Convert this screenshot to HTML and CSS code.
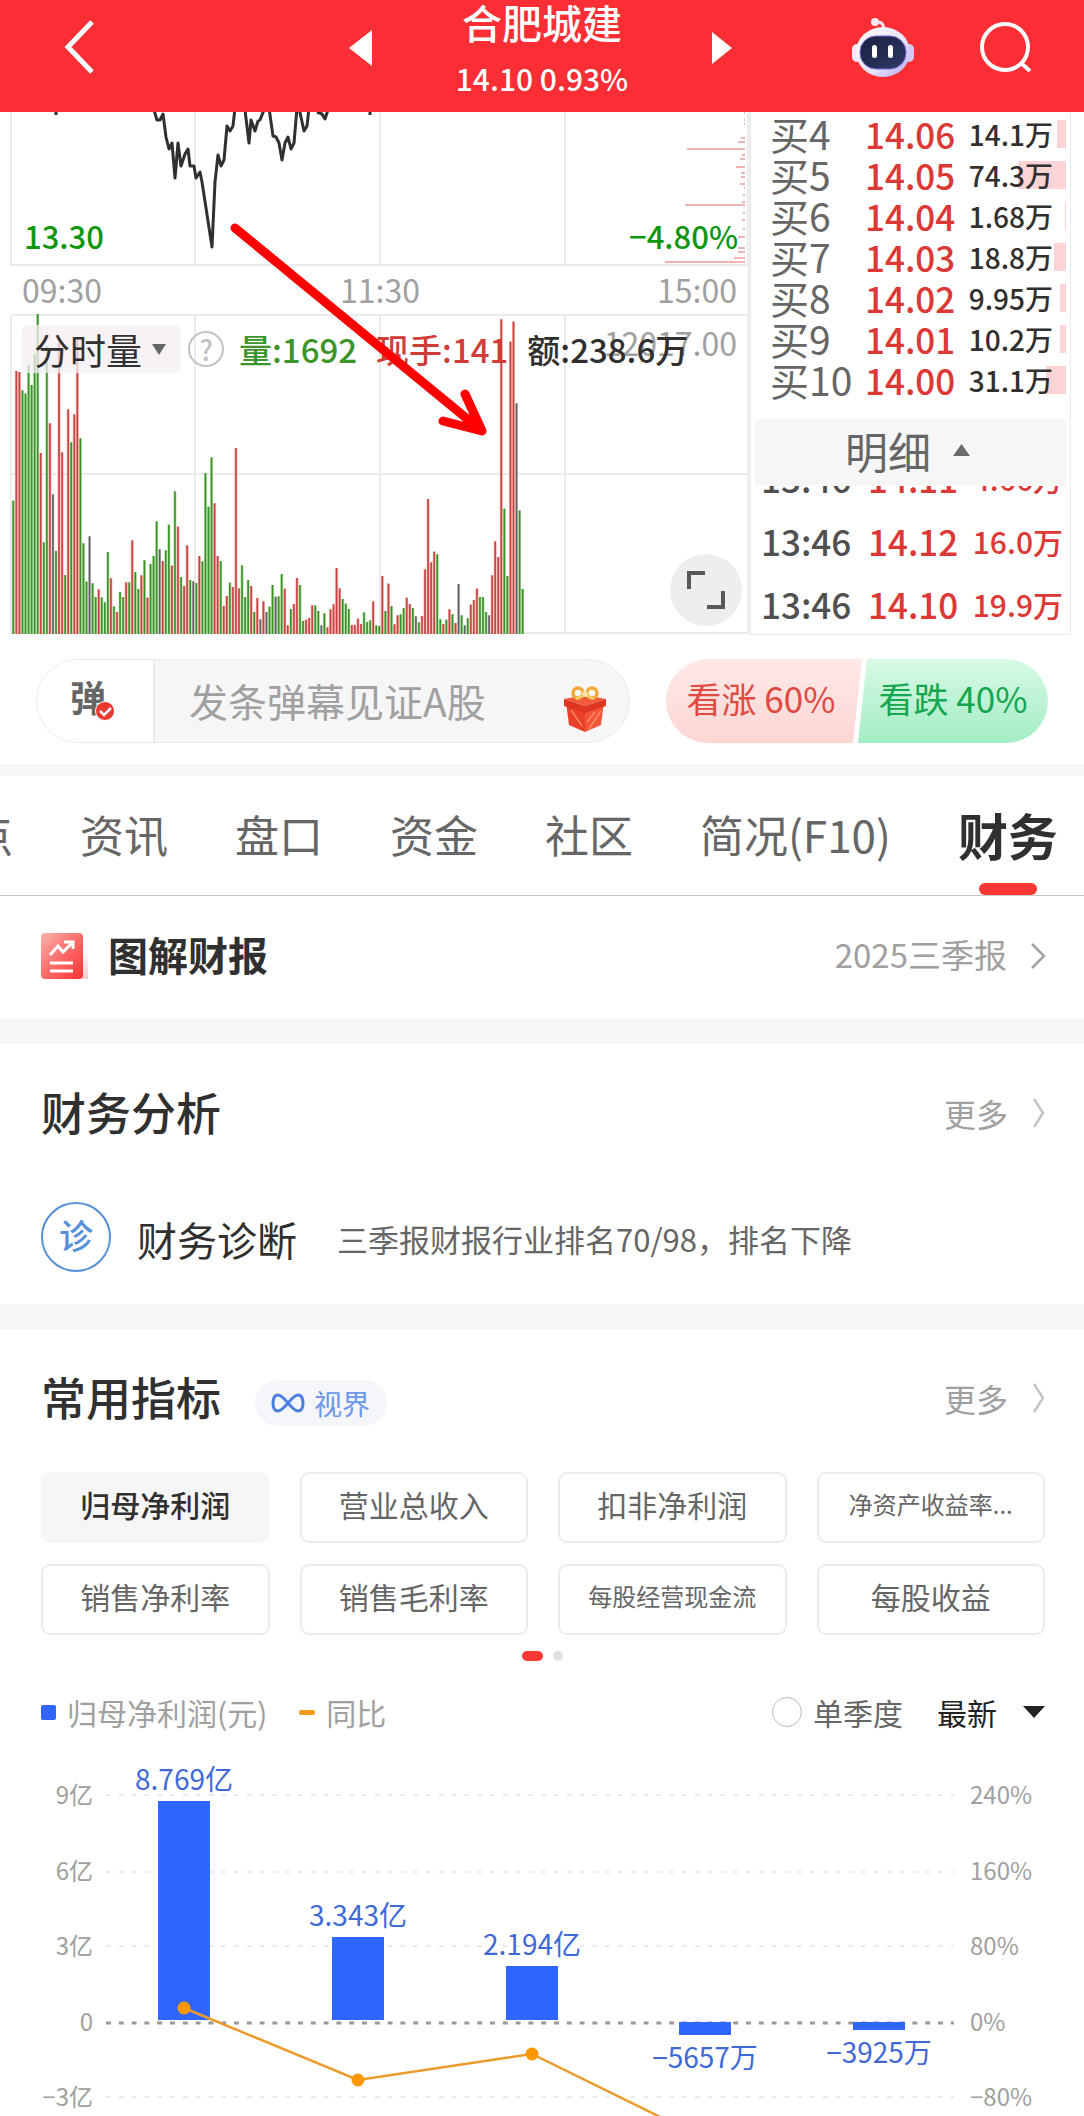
FILE: index.html
```html
<!DOCTYPE html>
<html lang="zh-CN">
<head>
<meta charset="utf-8">
<meta name="viewport" content="width=device-width, initial-scale=1">
<title>合肥城建</title>
<link rel="stylesheet" href="styles.css">
</head>
<body>
<header class="topbar">
  <div class="topbar-left">
    <button class="icon-btn" aria-label="返回">
      <svg width="32" height="56" viewBox="0 0 32 56" fill="none" stroke="#fff" stroke-width="5"><path d="M28 3 4 28l24 25"/></svg>
    </button>
  </div>
  <div class="switcher">
    <button class="icon-btn" aria-label="上一只"><svg width="23" height="36" viewBox="0 0 23 36"><path fill="#fff" d="M23 0v36L0 18z"/></svg></button>
    <div class="stock-title">
      <h1>合肥城建</h1>
      <p>14.10 0.93%</p>
    </div>
    <button class="icon-btn" aria-label="下一只"><svg width="20" height="32" viewBox="0 0 20 32"><path fill="#fff" d="M0 0v32l20-16z"/></svg></button>
  </div>
  <div class="topbar-right">
    <button class="icon-btn" aria-label="智能助手">
      <svg width="62" height="60" viewBox="0 0 62 60">
        <defs>
          <linearGradient id="shell" x1="0" y1="0" x2="1" y2="1"><stop offset="0" stop-color="#fff"/><stop offset=".6" stop-color="#e6e2fb"/><stop offset="1" stop-color="#b4a6ee"/></linearGradient>
          <linearGradient id="visor" x1="0" y1="0" x2="1" y2="1"><stop offset="0" stop-color="#1b2140"/><stop offset=".5" stop-color="#222c52"/><stop offset="1" stop-color="#313d66"/></linearGradient>
        </defs>
        <path d="M23 5q8-1 9 6" fill="none" stroke="#f6dfe8" stroke-width="3"/>
        <circle cx="23" cy="5" r="4" fill="#f9e6ee"/>
        <rect x="0" y="27" width="10" height="18" rx="5" fill="#efeafc"/>
        <rect x="52" y="27" width="10" height="18" rx="5" fill="#d3c9f6"/>
        <ellipse cx="31" cy="35" rx="27" ry="25" fill="url(#shell)"/>
        <rect x="8" y="19" width="46" height="33" rx="16" fill="url(#visor)" stroke="#7569d8" stroke-width="1"/>
        <rect x="20" y="28" width="5" height="13" rx="2.5" fill="#fff"/>
        <rect x="36" y="28" width="5" height="13" rx="2.5" fill="#fff"/>
      </svg>
    </button>
    <button class="icon-btn" aria-label="搜索">
      <svg width="52" height="52" viewBox="0 0 52 52" fill="none" stroke="#fff" stroke-width="4"><circle cx="25" cy="26" r="23"/><path d="m41 42 9 8"/></svg>
    </button>
  </div>
</header>

<main>
<section class="quote">
  <div class="intraday">
    <svg class="plot" viewBox="0 112 750 523" role="img" aria-label="分时走势与成交量">
      <g fill="none" stroke="#ebebeb" stroke-width="2">
        <path d="M11 112v153h737v-153M195 112v153M380 112v153M565 112v153"/>
        <path d="M11 315h737v318H11zM195 315v318M380 315v318M565 315v318M11 474h737"/>
        <path d="M749 112v523" stroke="#eee" stroke-width="3"/>
      </g>
      <path fill="none" stroke="#f0b4b4" stroke-width="2" d="M744 113h1M744 120h1M744 124h1M741 138h4M738 142h7M687 149h58M742 155h3M740 159h5M736 167h9M741 173h4M741 177h4M740 184h5M744 188h1M743 195h2M742 202h3M685 205h60M743 213h2M742 220h3M743 229h2M738 237h7M738 248h7M738 252h7M734 258h11M665 262h80"/>
      <g fill="none" stroke="#303030" stroke-width="3" stroke-linejoin="round">
        <path d="M154 110 157 120H160L163 114 166 137 169 149 172 143 175 178 178 143 181 166 185 154 188 149 190 166H194L196 178 200 172 202 182 212 247 215 182 218 155 221 166 224 160 227 126 230 131 233 126 235 108"/>
        <path d="M245 110 249 143 251 120 255 131 258 121 260 120 264 110M269 108 273 136 276 137 279 143 282 160 285 143 288 137 291 149 294 143 297 108M299 108 304 131 307 126 309 108M317 112 322 114 325 119 328 110M56 110v5M370 110v5"/>
      </g>
      <g id="volume-bars"></g>
      <g class="plot-down"><text x="24" y="249">13.30</text><text x="738" y="249" text-anchor="end">−4.80%</text></g>
      <g class="plot-axis"><text x="22" y="303">09:30</text><text x="380" y="303" text-anchor="middle">11:30</text><text x="737" y="303" text-anchor="end">15:00</text><text x="737" y="356" text-anchor="end">12017.00</text></g>
    </svg>
    <div class="volume-legend">
      <button class="metric-btn">分时量<svg width="14" height="11" viewBox="0 0 14 11"><path fill="#666" d="M0 0h14L7 11z"/></svg></button>
      <button class="help" aria-label="说明">?</button>
      <span class="vol-total">量:1692</span>
      <span class="vol-now">现手:141</span>
      <span class="vol-amount">额:238.6万</span>
    </div>
    <button class="expand" aria-label="全屏"><svg width="38" height="38" viewBox="0 0 38 38" fill="none" stroke="#585858" stroke-width="4"><path d="M2 18V2h16M36 20v16H20"/></svg></button>
    <svg class="arrow" viewBox="0 112 750 523" aria-hidden="true"><path d="M235 228 482 431M465 394 482 431 443 421" fill="none" stroke="#f00" stroke-width="9" stroke-linecap="round" stroke-linejoin="round"/></svg>
  </div>

  <div class="depth">
    <table class="book">
      <tr><th>买4</th><td>14.06</td><td class="lot" style="--w:9px">14.1万</td></tr>
      <tr><th>买5</th><td>14.05</td><td class="lot" style="--w:48px">74.3万</td></tr>
      <tr><th>买6</th><td>14.04</td><td class="lot" style="--w:1px">1.68万</td></tr>
      <tr><th>买7</th><td>14.03</td><td class="lot" style="--w:12px">18.8万</td></tr>
      <tr><th>买8</th><td>14.02</td><td class="lot" style="--w:6px">9.95万</td></tr>
      <tr><th>买9</th><td>14.01</td><td class="lot" style="--w:6px">10.2万</td></tr>
      <tr><th>买10</th><td>14.00</td><td class="lot" style="--w:20px">31.1万</td></tr>
    </table>
    <button class="detail-btn">明细<svg width="17" height="12" viewBox="0 0 17 12"><path fill="#6a6a6a" d="M0 12h17L8.500 0z"/></svg></button>
    <div class="ticks">
      <table>
        <tr><th>13:46</th><td>14.11</td><td class="lot">4.66万</td></tr>
        <tr><th>13:46</th><td>14.12</td><td class="lot">16.0万</td></tr>
        <tr><th>13:46</th><td>14.10</td><td class="lot">19.9万</td></tr>
      </table>
    </div>
  </div>
</section>

<section class="social">
  <div class="danmaku">
    <button class="danmaku-toggle" aria-label="弹幕开关">弹<svg class="check" width="20" height="20" viewBox="0 0 20 20"><circle cx="10" cy="10" r="9.500" fill="#e8392f" stroke="#fff"/><path d="m5 10 4 4 7-7" fill="none" stroke="#fff" stroke-width="2.500"/></svg></button>
    <input class="danmaku-input" type="text" placeholder="发条弹幕见证A股" aria-label="发弹幕">
    <button class="icon-btn gift" aria-label="礼物">
      <svg width="42" height="46" viewBox="0 0 42 46">
        <path d="M2 16 21 23v23L5 39z" fill="#e8402a"/><path d="M40 16 21 23v23l16-7z" fill="#f2553a"/>
        <path d="M0 13 21 9l21 4-21 7z" fill="#f15a3c"/><path d="M0 13l21 7 21-7v7l-21 7-21-7z" fill="#dc3520"/>
        <path d="m25 43 12-18M23 36l8-10M7 24l11 16" stroke="#ff8a5c" stroke-width="1.500"/>
        <g fill="none" stroke="#f2a93b" stroke-width="3.500"><ellipse cx="14" cy="7" rx="5" ry="5"/><ellipse cx="28" cy="7" rx="5" ry="5"/></g>
        <path d="m20 9-8 4M22 9l8 4" stroke="#f8c765" stroke-width="3"/><circle cx="21" cy="8" r="3" fill="#ffe3a0"/>
      </svg>
    </button>
  </div>
  <div class="vote">
    <button class="vote-up">看涨 60%</button>
    <button class="vote-down">看跌 40%</button>
  </div>
</section>

<nav class="tabs">
  <a href="#">点</a><a href="#">资讯</a><a href="#">盘口</a><a href="#">资金</a><a href="#">社区</a><a href="#">简况(F10)</a><a href="#" class="active" aria-current="page">财务</a>
</nav>

<a class="report" href="#">
  <svg width="47" height="46" viewBox="0 0 47 46">
    <defs><linearGradient id="doc" x1="0" y1="0" x2="1" y2="1"><stop offset="0" stop-color="#f9b3ae"/><stop offset=".5" stop-color="#fb6d6a"/><stop offset="1" stop-color="#fd3133"/></linearGradient>
    <linearGradient id="fold" x1="0" y1="0" x2="0" y2="1"><stop offset="0" stop-color="#fff"/><stop offset="1" stop-color="#fcc"/></linearGradient></defs>
    <path d="M41 16l6 4v26h-6z" fill="url(#fold)"/><rect width="42" height="46" rx="4" fill="url(#doc)"/>
    <g fill="none" stroke="#fff" stroke-width="3"><path d="m9 22 8-9 5 6 10-10M23 9h9v7"/><path d="M9 30h23M9 38h23"/></g>
  </svg>
  <h2>图解财报</h2>
  <span class="report-period">2025三季报</span>
  <svg width="15" height="26" viewBox="0 0 15 26" fill="none" stroke="#a3a3a3" stroke-width="2.500"><path d="m1 1 12 12L1 25"/></svg>
</a>

<section class="analysis">
  <div class="section-head">
    <h2>财务分析</h2>
    <a class="more" href="#">更多<svg width="12" height="30" viewBox="0 0 12 30" fill="none" stroke="#c4c4c4" stroke-width="2.500"><path d="m1 1 9 14-9 14"/></svg></a>
  </div>
  <div class="diagnosis">
    <span class="diagnosis-badge">诊</span>
    <h3>财务诊断</h3>
    <p>三季报财报行业排名70/98，排名下降</p>
  </div>
</section>

<section class="indicators">
  <div class="section-head">
    <h2>常用指标</h2>
    <a class="vision" href="#"><svg width="34" height="20" viewBox="0 0 34 20" fill="none" stroke="#4d7fe3" stroke-width="3"><path d="M17 10C12 4 9 2 7 2 3 2 2 6 2 10s1 8 5 8c2 0 5-2 10-8S25 2 27 2c4 0 5 4 5 8s-1 8-5 8c-2 0-5-2-10-8z"/></svg>视界</a>
    <a class="more" href="#">更多<svg width="12" height="30" viewBox="0 0 12 30" fill="none" stroke="#c4c4c4" stroke-width="2.500"><path d="m1 1 9 14-9 14"/></svg></a>
  </div>
  <div class="chips">
    <button class="selected">归母净利润</button><button>营业总收入</button><button>扣非净利润</button><button class="small">净资产收益率...</button>
    <button>销售净利率</button><button>销售毛利率</button><button class="small">每股经营现金流</button><button>每股收益</button>
  </div>
  <div class="pager"><i class="on"></i><i></i></div>
  <div class="chart-bar">
    <span class="key key-profit">归母净利润(元)</span>
    <span class="key key-yoy">同比</span>
    <label class="quarter"><input type="radio" name="quarter">单季度</label>
    <label class="range"><select aria-label="报告期"><option>最新</option></select><svg width="22" height="12" viewBox="0 0 22 12"><path fill="#222" d="M0 0h22L11 12z"/></svg></label>
  </div>
  <svg class="profit-chart" viewBox="0 1733 1084 383" role="img" aria-label="归母净利润与同比">
    <g fill="none" stroke="#efe9ec" stroke-width="2" stroke-dasharray="5 7.800"><path d="M106 1795h848M106 1872h848M106 1946h848M106 2097h848"/><path d="M106 2023h848" stroke="#999" stroke-width="3"/></g>
    <g fill="#3065ff"><path d="M158 1801h52v219h-52zM332 1937h52v83h-52zM506 1966h52v54h-52zM679 2022h52v13h-52zM853 2022h52v8h-52z"/></g>
    <g class="axis" text-anchor="end"><text x="93" y="1804">9亿</text><text x="93" y="1880">6亿</text><text x="93" y="1955">3亿</text><text x="93" y="2031">0</text><text x="93" y="2106">−3亿</text></g>
    <g class="axis"><text x="970" y="1804">240%</text><text x="970" y="1880">160%</text><text x="970" y="1955">80%</text><text x="970" y="2031">0%</text><text x="970" y="2106">−80%</text></g>
    <g class="value" text-anchor="middle"><text x="184" y="1790">8.769亿</text><text x="358" y="1926">3.343亿</text><text x="532" y="1955">2.194亿</text><text x="705" y="2068">−5657万</text><text x="879" y="2063">−3925万</text></g>
    <path d="M184 2008 358 2080 532 2054 705 2139" fill="none" stroke="#eb9a2c" stroke-width="2.500"/>
    <g fill="#ff9800"><circle cx="184" cy="2008" r="6.500"/><circle cx="358" cy="2080" r="6.500"/><circle cx="532" cy="2054" r="6.500"/></g>
  </svg>
</section>
</main>
<script src="chart.js"></script>
</body>
</html>
```

FILE: chart.js
```javascript
// Per-minute volume: distance of the bar's top from the plot origin, then
// r = up, g = down, k = flat. Three plot units make one pixel.
const minutes = "632g 243r 246r 301g 311g 225g 285g 192g 72g 489r 757g 169g 400r 613k 783g 160r 487r 855g 358r 457g 373r 150r 445g 760g 875g 739k 880g 921g 898r 922g 937g 786g 865r 949g 966r 906g 921g 877r 877g 751r 846g 897g 856r 811g 923r 822g 798g 694g 778k 813r 781g 704g 827r 604g 710r 861g 888r 766r 870g 874k 879g 798r 814g 549g 650g 502g 640r 798r 813g 948r 918r 878g 891r 474r 895r 826g 921g 870g 888r 966g 924r 988k 934r 966k 950g 885g 920k 919g 852g 896r 1006r 957g 942r 864r 885g 993g 989r 984r 946r 946g 963g 1006k 970g 1012r 958r 943r 834r 895r 927g 941g 957g 1005r 1005r 986r 1002r 967g 996g 991g 934r 1006g 1008g 858r 963g 881r 948g 1003r 976r 973g 954g 923r 942r 954g 979k 997g 978r 838r 627r 817r 785r 793g 988g 1002r 989g 958r 973g 999r 882k 976g 1006k 985g 944r 930r 896r 921g 921g 966g 976k 856r 754r 801r 88r 656g 858g 155r 95r 340k 661g 897g".split(" ");
const colors = { r: ["#f7b3b3", "#c4443f"], g: ["#b3e0a6", "#3c8f2b"], k: ["#cfcfcf", "#5e5e5e"] };
const layer = document.getElementById("volume-bars");
const bottom = 634;

minutes.forEach((entry, i) => {
  const top = 290 + parseInt(entry, 10) / 3;
  const center = 13.3 + i * 3.05;
  colors[entry.slice(-1)].forEach((fill, core) => {
    const width = core ? 1.6 : 3;
    const bar = document.createElementNS("http://www.w3.org/2000/svg", "rect");
    bar.setAttribute("x", center - width / 2);
    bar.setAttribute("y", top);
    bar.setAttribute("width", width);
    bar.setAttribute("height", bottom - top);
    bar.setAttribute("fill", fill);
    layer.appendChild(bar);
  });
});
```

FILE: styles.css
```css
* { box-sizing: border-box; }
body {
  margin: 0;
  background: #fff;
  color: #303030;
  font-family: "Noto Sans CJK SC", "Noto Sans", sans-serif;
  font-size: 30px;
}
h1, h2, h3, p { margin: 0; }
a { color: inherit; text-decoration: none; }
button, input, select { font: inherit; color: inherit; border: 0; background: none; padding: 0; }
svg { display: block; flex: none; }
.icon-btn { display: block; }

/* top bar */
.topbar {
  display: grid;
  grid-template-columns: 1fr auto 1fr;
  align-items: center;
  height: 112px;
  background: #fa2e34;
  color: #fff;
}
.topbar-left { padding: 0 0 18px 64px; }
.topbar-right { display: flex; justify-content: flex-end; align-items: center; gap: 66px; padding: 0 52px 18px 0; }
.switcher { display: flex; align-items: center; gap: 84px; padding-right: 3px; }
.switcher .icon-btn { padding-bottom: 16px; }
.stock-title { text-align: center; white-space: nowrap; }
.stock-title h1 { font-size: 40px; font-weight: 500; line-height: 44px; }
.stock-title p { font-size: 30px; font-weight: 500; line-height: 68px; }

/* intraday chart and order book */
.quote { display: grid; grid-template-columns: 750fr 334fr; }
.intraday { position: relative; min-width: 0; }
.plot, .arrow { width: 100%; height: auto; }
.arrow { position: absolute; inset: 0; pointer-events: none; }
.plot-down { font-size: 31px; font-weight: 500; fill: #0f960f; }
.plot-axis { font-size: 32px; font-weight: 400; fill: #a0a0a0; }
.volume-legend {
  position: absolute;
  top: 213px;
  left: 22px;
  display: flex;
  align-items: center;
  font-size: 33px;
  font-weight: 500;
  line-height: 48px;
  white-space: nowrap;
}
.metric-btn {
  display: flex;
  align-items: center;
  gap: 10px;
  padding: 0 15px 0 12px;
  border-radius: 6px;
  background: rgba(244, 238, 243, .75);
  font-size: 36px;
  font-weight: 400;
  line-height: 48px;
}
.help {
  width: 36px;
  height: 36px;
  margin: 0 15px 0 7px;
  border: 2px solid #c2c2c2;
  border-radius: 50%;
  color: #c2c2c2;
  font-size: 28px;
  line-height: 32px;
}
.vol-total { color: #3c952b; }
.vol-now { margin-left: 19px; color: #d03c38; }
.vol-amount { margin-left: 19px; }
.expand {
  position: absolute;
  right: 8px;
  bottom: 9px;
  display: grid;
  place-items: center;
  width: 72px;
  height: 72px;
  border-radius: 50%;
  background: #eee;
}
.depth {
  display: flex;
  flex-direction: column;
  margin-right: 13px;
  padding: 1px 4px 0;
  border: solid #ebebeb;
  border-width: 0 1px 1px;
}
.depth table { width: 100%; border-collapse: collapse; }
.depth th, .depth td { padding: 0; text-align: left; font-weight: 500; white-space: nowrap; }
.book tr { height: 41px; line-height: 38px; }
.book th { width: 110px; padding: 0 0 2px 15px; color: #666; font-size: 39px; font-weight: 400; }
.book td, .ticks td { width: 96px; color: #dc3835; font-size: 35px; }
.depth .lot { width: auto; text-align: right; }
.book .lot {
  padding-right: 13px;
  background: linear-gradient(#fcd4d5, #fcd4d5) no-repeat right center / var(--w) 28px;
  color: #303030;
  font-size: 28px;
}
.detail-btn {
  display: flex;
  justify-content: center;
  align-items: center;
  gap: 22px;
  height: 67px;
  margin-top: 19px;
  padding: 0 6px 5px 0;
  background: #f6f6f6;
  color: #666;
  font-size: 43px;
}
.ticks { display: flex; align-items: flex-end; height: 148px; overflow: hidden; }
.ticks tr { height: 63px; line-height: 58px; }
.ticks th, .ticks td { padding-top: 2px; }
.ticks th { width: 113px; padding-left: 6px; color: #505050; font-size: 35px; }
.ticks .lot { padding-right: 3px; font-size: 30px; }

/* comments and vote */
.social {
  display: flex;
  gap: 36px;
  padding: 24px 36px 21px;
  border-bottom: 12px solid #f6f6f6;
}
.danmaku {
  display: flex;
  flex: 1;
  align-items: center;
  height: 84px;
  overflow: hidden;
  border: 1px solid #ebebeb;
  border-radius: 42px;
  background: #f6f6f6;
}
.danmaku-toggle {
  position: relative;
  align-self: stretch;
  width: 118px;
  padding: 0 14px 11px 0;
  border-right: 2px solid #ebebeb;
  background: #fff;
  color: #666;
  font-size: 36px;
  font-weight: 700;
}
.check { position: absolute; left: 58px; top: 41px; }
.danmaku-input { flex: 1; min-width: 0; padding: 0 0 3px 34px; font-size: 39px; }
.danmaku-input::placeholder { color: #a0a0a0; opacity: 1; }
.gift { margin-right: 23px; padding-top: 16px; }
.vote { display: flex; width: 382px; height: 84px; overflow: hidden; border-radius: 42px; font-size: 35px; }
.vote button { flex: 1; padding-bottom: 7px; }
.vote .vote-up {
  padding-right: 6px;
  margin-right: -4px;
  clip-path: polygon(0 0, 100% 0, calc(100% - 9px) 100%, 0 100%);
  background: linear-gradient(#ffe9e8, #fcd6d3);
  color: #e04a40;
}
.vote-down {
  clip-path: polygon(9px 0, 100% 0, 100% 100%, 0 100%);
  background: linear-gradient(#d9fae6, #a2ecc3);
  color: #15a650;
}

/* tabs */
.tabs {
  display: flex;
  gap: 67px;
  height: 120px;
  overflow: hidden;
  border-bottom: 1px solid #c8c8c8;
  color: #666;
  font-size: 44px;
  line-height: 116px;
  white-space: nowrap;
}
.tabs a:first-child { margin-left: -31px; }
.tabs .active { position: relative; color: #303030; font-size: 50px; font-weight: 700; }
.tabs .active::after {
  content: "";
  position: absolute;
  left: 21px;
  right: 21px;
  bottom: 0;
  height: 12px;
  border-radius: 6px;
  background: #ff3835;
}

/* report link */
.report {
  display: flex;
  align-items: center;
  height: 148px;
  padding: 0 38px 2px 41px;
  border-bottom: 26px solid #f6f6f6;
}
.report h2, .report-period { padding-bottom: 4px; line-height: 60px; }
.report h2 { margin-left: 20px; font-size: 40px; }
.report-period { margin: 0 24px 0 auto; color: #a0a0a0; font-size: 33px; }

/* sections */
.section-head { display: flex; align-items: center; height: 60px; }
.section-head h2 { padding-bottom: 2px; font-size: 45px; font-weight: 500; line-height: 60px; }
.more { display: flex; align-items: center; gap: 25px; margin-left: auto; color: #a0a0a0; font-size: 32px; }
.analysis { padding: 39px 39px 32px 41px; border-bottom: 25px solid #f6f6f6; }
.diagnosis { display: flex; align-items: center; margin-top: 59px; }
.diagnosis-badge {
  width: 70px;
  height: 70px;
  border: 2px solid #5590d8;
  border-radius: 50%;
  color: #5590d8;
  font-size: 34px;
  font-weight: 500;
  line-height: 62px;
  text-align: center;
}
.diagnosis h3, .diagnosis p { padding-top: 3px; }
.diagnosis h3 { margin: 0 40px 0 26px; font-size: 40px; font-weight: 400; }
.diagnosis p { color: #666; font-size: 31px; }

.indicators { padding-top: 39px; }
.indicators .section-head, .chips, .chart-bar { margin-left: 41px; margin-right: 39px; }
.vision {
  display: flex;
  align-items: center;
  gap: 9px;
  height: 46px;
  margin: 10px 0 0 34px;
  padding: 0 17px 0 16px;
  border-radius: 23px;
  background: #f5f6f9;
  color: #6c97ea;
  font-size: 28px;
}
.chips { display: grid; grid-template-columns: repeat(4, 1fr); gap: 21px 30px; margin-top: 44px; }
.chips button {
  height: 71px;
  padding-bottom: 8px;
  border: 2px solid #eeebec;
  border-radius: 9px;
  color: #666;
  font-size: 30px;
}
.chips .selected { border-color: #f6f6f6; background: #f6f6f6; color: #303030; font-weight: 500; }
.chips .small { font-size: 24px; }
.pager { display: flex; justify-content: center; gap: 10px; margin-top: 16px; }
.pager i { width: 10px; height: 10px; border-radius: 5px; background: #e3dfe3; }
.pager .on { width: 21px; background: #fb3a35; }
.chart-bar { display: flex; align-items: center; height: 40px; margin-top: 32px; line-height: 36px; padding-bottom: 2px; }
.key { display: flex; align-items: center; gap: 11px; color: #a0a0a0; }
.key::before { content: ""; width: 15px; height: 15px; border-radius: 2px; background: #3065ff; }
.key-yoy { margin-left: 32px; }
.key-yoy::before { width: 16px; height: 5px; background: #f09a1a; }
.quarter { display: flex; align-items: center; gap: 11px; margin-left: auto; color: #666; }
.quarter input { appearance: none; width: 30px; height: 30px; margin: 0; border: 1px solid #bbb; border-radius: 50%; }
.range { display: flex; align-items: center; gap: 26px; margin-left: 34px; color: #222; }
.range select { appearance: none; }
.profit-chart { width: 100%; height: auto; }
.axis { font-size: 24px; fill: #a0a0a0; }
.value { font-size: 28px; fill: #3f68d8; }
```
